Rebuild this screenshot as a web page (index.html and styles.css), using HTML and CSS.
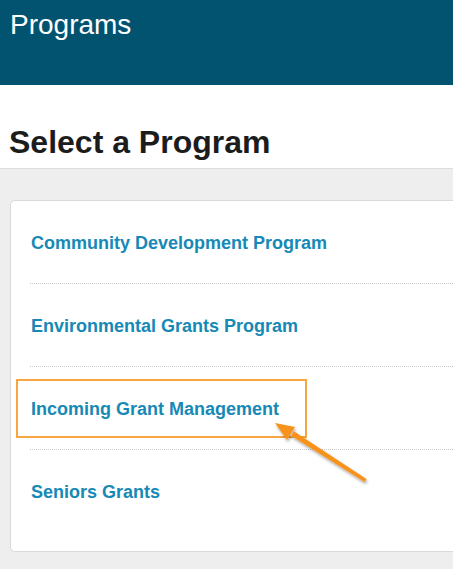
FILE: index.html
```html
<!DOCTYPE html>
<html>
<head>
<meta charset="utf-8">
<link rel="stylesheet" href="styles.css">
</head>
<body>
<header class="topbar">
  <h1 class="topbar-title">Programs</h1>
</header>
<section class="page-head">
  <h2 class="page-title">Select a Program</h2>
</section>
<main class="content">
  <div class="card">
    <ul class="program-list">
      <li class="program-row"><a class="program-link" href="#">Community Development Program</a></li>
      <li class="program-row"><a class="program-link" href="#">Environmental Grants Program</a></li>
      <li class="program-row"><a class="program-link" href="#">Incoming Grant Management</a></li>
      <li class="program-row"><a class="program-link" href="#">Seniors Grants</a></li>
    </ul>
  </div>
</main>
<div class="highlight-box"></div>
<svg class="annotation-arrow" width="453" height="569" viewBox="0 0 453 569" xmlns="http://www.w3.org/2000/svg">
  <defs>
    <filter id="sh" x="-20%" y="-20%" width="140%" height="140%">
      <feDropShadow dx="1" dy="2" stdDeviation="1.5" flood-color="#000" flood-opacity="0.35"/>
    </filter>
  </defs>
  <g filter="url(#sh)" fill="#f7931e">
    <polygon points="366.5,479 364.5,482 291.5,436 293.5,431"/>
    <polygon points="275,423 295,427 287,440"/>
  </g>
</svg>
</body>
</html>
```
FILE: styles.css
```css
html, body {
  margin: 0;
  padding: 0;
  overflow: hidden;
  width: 453px;
  height: 569px;
  background: #eeeeee;
  font-family: "Liberation Sans", Arial, Helvetica, sans-serif;
}
body {
  position: relative;
}
.topbar {
  background: #01536f;
  height: 85px;
  box-sizing: border-box;
  padding: 9px 0 0 10px;
}
.topbar-title {
  margin: 0;
  color: #ffffff;
  font-size: 28px;
  line-height: 32px;
  font-weight: normal;
}
.page-head {
  background: #ffffff;
  padding: 38px 0 7px 9px;
  border-bottom: 1px solid #dddddd;
}
.page-title {
  margin: 0;
  font-size: 32px;
  line-height: 38px;
  font-weight: bold;
  color: #1c1c1c;
}
.content {
  padding: 31px 0 0 10px;
}
.card {
  background: #ffffff;
  border: 1px solid #dadada;
  border-right: none;
  border-radius: 5px 0 0 5px;
  padding-bottom: 19px;
}
.program-list {
  list-style: none;
  margin: 0 0 0 19px;
  padding: 0;
}
.program-row {
  padding: 32px 0 30px 1px;
  border-bottom: 1px dotted #c8c8c8;
}
.program-row:last-child {
  border-bottom: none;
}
.program-link {
  display: block;
  font-size: 18px;
  line-height: 20px;
  font-weight: bold;
  color: #1689b6;
  text-decoration: none;
}
.highlight-box {
  position: absolute;
  left: 16px;
  top: 379px;
  width: 287px;
  height: 55px;
  border: 2px solid #f7a540;
}
.annotation-arrow {
  position: absolute;
  left: 0;
  top: 0;
  pointer-events: none;
}
```
